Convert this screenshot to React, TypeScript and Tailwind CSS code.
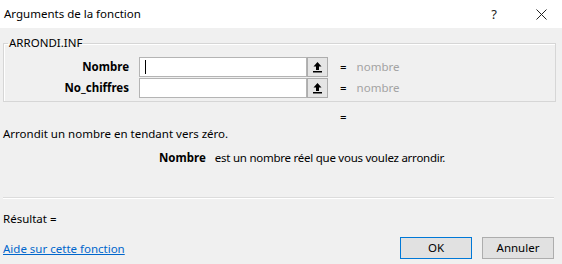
import React from 'react';

const font = { fontFamily: '"Noto Sans", "Open Sans", sans-serif' };

function RefButton() {
  return (
    <div className="flex h-full w-[21px] items-center justify-center border border-[#adadad] bg-[#e5e5e5]">
      <svg width="11" height="12" viewBox="0 0 11 12">
        <path d="M5.5 1 L1.5 5.5 H4 V9 H7 V5.5 H9.5 Z" fill="#000" />
        <rect x="1" y="10" width="9" height="1.5" fill="#000" />
      </svg>
    </div>
  );
}

function ArgRow({ label, cursor }: { label: string; cursor?: boolean }) {
  return (
    <div className="flex h-[20px] items-center">
      <div className="w-[121px] text-right text-[11.5px] font-bold leading-none text-black">{label}</div>
      <div className="ml-[10px] flex h-full w-[168px] items-center border border-[#b4b4b4] bg-white pl-[5px]">
        {cursor && <div className="h-[14px] w-[1px] bg-black" />}
      </div>
      <RefButton />
      <span className="ml-[12px] text-[11.5px] text-black">=</span>
      <span className="ml-[10px] text-[11.5px] text-[#a3a3a3]">nombre</span>
    </div>
  );
}

export default function App() {
  return (
    <div className="flex h-[264px] w-[562px] flex-col bg-[#f0f0f0] text-black" style={font}>
      <div className="flex h-[28px] items-center bg-white pl-[4px] pr-[15px]">
        <span className="text-[11.5px] leading-none">Arguments de la fonction</span>
        <span className="ml-auto mr-[2px] text-[13px] leading-none text-[#222]">?</span>
        <svg className="ml-[37px]" width="11" height="11" viewBox="0 0 11 11">
          <path d="M0.5 0.5 L10.5 10.5 M10.5 0.5 L0.5 10.5" stroke="#222" strokeWidth="1" />
        </svg>
      </div>

      <div className="flex flex-1 flex-col pl-[3px] pr-[8px] text-[11.5px]">
        <fieldset className="mr-[-2px] mt-[7px] border border-[#d6d6d6] pb-[3px] pl-[4px] shadow-[inset_1px_1px_0_#ffffff]">
          <legend className="px-[1px] leading-[16px]">ARRONDI.INF</legend>
          <div className="mt-[6px] flex flex-col gap-[1px]">
            <ArgRow label="Nombre" cursor />
            <ArgRow label="No_chiffres" />
          </div>
        </fieldset>

        <div className="mt-[7px] h-[16px] pl-[337px] leading-[16px]">=</div>
        <div className="mt-[1px] leading-[16px]">Arrondit un nombre en tendant vers zéro.</div>
        <div className="mt-[8px] flex pl-[156px] leading-[16px]">
          <span className="font-bold">Nombre</span>
          <span className="ml-[9px] tracking-[-0.25px]">est un nombre réel que vous voulez arrondir.</span>
        </div>

        <div className="mt-[31px] h-[1px] bg-[#dcdcdc] shadow-[0_1px_0_#ffffff]" />

        <div className="mt-[13px] leading-[16px]">Résultat =</div>

        <div className="mt-[10px] flex h-[22px] items-center">
          <a className="mt-[2px] text-[#0066cc] underline">Aide sur cette fonction</a>
          <button className="ml-auto h-[22px] w-[72px] border border-[#0078d7] bg-[#e1e1e1]">OK</button>
          <button className="ml-[10px] h-[22px] w-[72px] border border-[#adadad] bg-[#e1e1e1]">Annuler</button>
        </div>
      </div>
    </div>
  );
}
